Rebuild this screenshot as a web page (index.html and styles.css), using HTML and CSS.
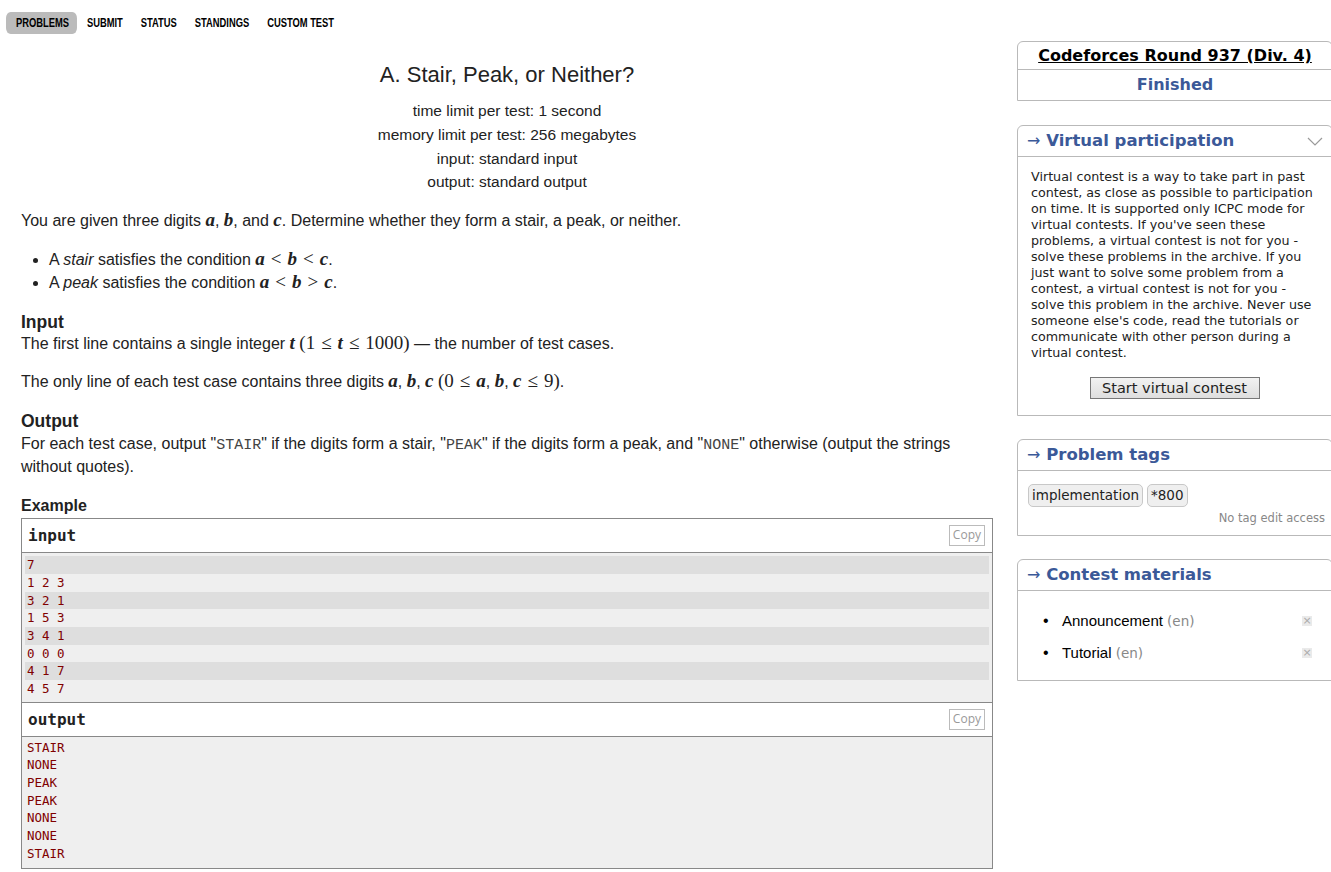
FILE: index.html
```html
<!DOCTYPE html>
<html>
<head>
<meta charset="utf-8">
<link rel="stylesheet" href="styles.css">
</head>
<body>
<div class="layout">
  <main class="main">
    <nav class="menu">
      <a class="menu-item active">PROBLEMS</a>
      <a class="menu-item">SUBMIT</a>
      <a class="menu-item">STATUS</a>
      <a class="menu-item">STANDINGS</a>
      <a class="menu-item">CUSTOM TEST</a>
    </nav>
    <section class="statement">
      <div class="header">
        <div class="title">A. Stair, Peak, or Neither?</div>
        <div class="limit">time limit per test: 1 second</div>
        <div class="limit">memory limit per test: 256 megabytes</div>
        <div class="limit">input: standard input</div>
        <div class="limit">output: standard output</div>
      </div>
      <p class="para first">You are given three digits <span class="m">a</span>, <span class="m">b</span>, and <span class="m">c</span>. Determine whether they form a stair, a peak, or neither.</p>
      <ul class="conds">
        <li>A <i>stair</i> satisfies the condition <span class="m">a</span><span class="mo">&lt;</span><span class="m">b</span><span class="mo">&lt;</span><span class="m">c</span>.</li>
        <li>A <i>peak</i> satisfies the condition <span class="m">a</span><span class="mo">&lt;</span><span class="m">b</span><span class="mo">&gt;</span><span class="m">c</span>.</li>
      </ul>
      <div class="sec-title">Input</div>
      <p class="para tight">The first line contains a single integer <span class="m">t</span> <span class="mn">(1</span><span class="mo">≤</span><span class="m">t</span><span class="mo">≤</span><span class="mn">1000)</span> — the number of test cases.</p>
      <p class="para">The only line of each test case contains three digits <span class="m">a</span>, <span class="m">b</span>, <span class="m">c</span> <span class="mn">(0</span><span class="mo">≤</span><span class="m">a</span>, <span class="m">b</span>, <span class="m">c</span><span class="mo">≤</span><span class="mn">9)</span>.</p>
      <div class="sec-title out">Output</div>
      <p class="para tight out-text">For each test case, output "<code>STAIR</code>" if the digits form a stair, "<code>PEAK</code>" if the digits form a peak, and "<code>NONE</code>" otherwise (output the strings without quotes).</p>
      <div class="sec-title ex">Example</div>
      <div class="sample">
        <div class="sample-head"><span class="sample-name">input</span><span class="copy">Copy</span></div>
        <div class="sample-body">
          <div class="row odd">7</div>
          <div class="row">1 2 3</div>
          <div class="row odd">3 2 1</div>
          <div class="row">1 5 3</div>
          <div class="row odd">3 4 1</div>
          <div class="row">0 0 0</div>
          <div class="row odd">4 1 7</div>
          <div class="row">4 5 7</div>
        </div>
        <div class="sample-head"><span class="sample-name">output</span><span class="copy">Copy</span></div>
        <div class="sample-body last">
          <div class="row">STAIR</div>
          <div class="row">NONE</div>
          <div class="row">PEAK</div>
          <div class="row">PEAK</div>
          <div class="row">NONE</div>
          <div class="row">NONE</div>
          <div class="row">STAIR</div>
        </div>
      </div>
    </section>
  </main>
  <aside class="sidebar">
    <div class="box contest-box">
      <div class="contest-name"><a>Codeforces Round 937 (Div. 4)</a></div>
      <div class="contest-state">Finished</div>
    </div>
    <div class="box">
      <div class="box-title"><span class="arrow">→</span> Virtual participation
        <svg class="chev" width="16" height="10" viewBox="0 0 16 10"><path d="M1 1 L8 8 L15 1" fill="none" stroke="#9a9a9a" stroke-width="1.2"/></svg>
      </div>
      <div class="vp-body">
        <p class="vp-text">Virtual contest is a way to take part in past contest, as close as possible to participation on time. It is supported only ICPC mode for virtual contests. If you've seen these problems, a virtual contest is not for you - solve these problems in the archive. If you just want to solve some problem from a contest, a virtual contest is not for you - solve this problem in the archive. Never use someone else's code, read the tutorials or communicate with other person during a virtual contest.</p>
        <div class="vp-btn-wrap"><button class="vp-btn">Start virtual contest</button></div>
      </div>
    </div>
    <div class="box">
      <div class="box-title"><span class="arrow">→</span> Problem tags</div>
      <div class="tags-body">
        <div class="tags"><span class="tag">implementation</span><span class="tag">*800</span></div>
        <div class="no-edit">No tag edit access</div>
      </div>
    </div>
    <div class="box">
      <div class="box-title"><span class="arrow">→</span> Contest materials</div>
      <ul class="materials">
        <li><span class="mat-name">Announcement <span class="lang">(en)</span></span><span class="xicon">×</span></li>
        <li><span class="mat-name">Tutorial <span class="lang">(en)</span></span><span class="xicon">×</span></li>
      </ul>
    </div>
  </aside>
</div>
</body>
</html>
```
FILE: styles.css
```css
html, body {
  margin: 0;
  padding: 0;
  background: #fff;
  overflow: hidden;
}
body {
  font-family: "Liberation Sans", Arial, sans-serif;
  color: #222;
}
.layout {
  display: flex;
  align-items: flex-start;
  width: 1400px;
}
.main {
  width: 993px;
  flex: none;
}
.menu {
  display: flex;
  margin: 12px 0 0 6.4px;
  height: 22px;
  align-items: center;
  transform: scaleX(0.78);
  transform-origin: 0 0;
}
.menu-item {
  font-family: "Liberation Sans", Arial, sans-serif;
  font-weight: bold;
  font-size: 12px;
  color: #000;
  padding: 0 11.5px;
  height: 22px;
  line-height: 23px;
  border-radius: 6px;
}
.menu-item.active {
  background: #bbbbbb;
  padding: 0 10.3px 0 12.8px;
  margin-right: 1.2px;
}
.statement {
  margin-left: 21px;
  padding-top: 27px;
  font-size: 16px;
  color: #222;
}
.header {
  text-align: center;
}
.title {
  font-size: 22px;
  line-height: 28px;
  margin-bottom: 10px;
}
.limit {
  line-height: 23.8px;
  font-size: 15.5px;
}
.para {
  margin: 15px 0 0 0;
  line-height: 23px;
}
.para.first {
  margin-top: 15px;
}
.para.tight {
  margin-top: 0;
}
.para.out-text {
  margin-top: 1px;
}
.m {
  font-family: "Liberation Serif", "Times New Roman", serif;
  font-style: italic;
  font-weight: bold;
  font-size: 19px;
  line-height: 1;
}
.mn {
  font-family: "Liberation Serif", "Times New Roman", serif;
  font-size: 19px;
  line-height: 1;
}
.mo {
  font-family: "Liberation Serif", "Times New Roman", serif;
  font-size: 19px;
  line-height: 1;
  padding: 0 6px;
}
.conds {
  margin: 16px 0 0 0;
  padding-left: 28px;
  line-height: 23px;
}
.sec-title {
  font-weight: bold;
  font-size: 17.5px;
  line-height: 20px;
  margin-top: 18px;
  color: #222;
}
.sec-title.out {
  margin-top: 18px;
}
.sec-title.ex {
  font-size: 16px;
  margin-top: 17px;
  line-height: 22px;
}
code {
  font-family: "Liberation Mono", "Courier New", monospace;
  font-size: 15px;
  line-height: 1;
  color: #444;
}
.sample {
  margin-top: 1px;
  border: 1px solid #888;
  width: 970px;
}
.sample-head {
  display: flex;
  justify-content: space-between;
  align-items: center;
  height: 33px;
  padding: 0 6px 0 6px;
  border-bottom: 1px solid #888;
  background: #fff;
}
.sample-body + .sample-head {
  border-top: 1px solid #888;
}
.sample-name {
  font-family: "DejaVu Sans Mono", monospace;
  font-weight: bold;
  font-size: 16px;
  color: #222;
}
.copy {
  font-family: "Open Sans", "Liberation Sans", sans-serif;
  font-size: 12px;
  color: #999;
  border: 1px solid #bbb;
  padding: 0 3px;
  height: 19px;
  line-height: 18px;
  margin-right: 1px;
}
.sample-body {
  background: #efefef;
  padding: 3px 3px 4px 3px;
  font-family: "DejaVu Sans Mono", monospace;
  font-size: 12.5px;
  color: #800000;
}
.sample-body.last {
  padding-top: 2px;
  height: 125px;
}
.row {
  height: 17.7px;
  line-height: 17.7px;
  padding-left: 2px;
}
.row.odd {
  background: #dedede;
}
.sidebar {
  width: 316px;
  margin-left: 24px;
  flex: none;
  padding-top: 41px;
  font-family: "DejaVu Sans", Verdana, sans-serif;
}
.box {
  border: 1px solid #b9b9b9;
  border-radius: 6px 6px 0 0;
  margin-bottom: 23px;
}
.contest-box {
  text-align: center;
  margin-bottom: 24px;
}
.contest-name {
  height: 27px;
  line-height: 27px;
  border-bottom: 1px solid #b9b9b9;
  font-weight: bold;
  font-size: 16px;
}
.contest-name a {
  color: #000;
  text-decoration: underline;
}
.contest-state {
  height: 30px;
  line-height: 30px;
  font-weight: bold;
  font-size: 16px;
  color: #3b5998;
}
.box-title {
  position: relative;
  height: 30px;
  line-height: 30px;
  border-bottom: 1px solid #b9b9b9;
  padding-left: 9px;
  font-weight: bold;
  font-size: 16.5px;
  color: #3b5998;
}
.arrow {
  font-family: "DejaVu Sans", sans-serif;
  font-weight: normal;
  font-size: 16px;
}
.chev {
  position: absolute;
  right: 9px;
  top: 11px;
}
.vp-body {
  padding: 12px 14px 16px 13px;
}
.vp-text {
  margin: 0;
  font-size: 12.7px;
  line-height: 16px;
  color: #222;
}
.vp-btn-wrap {
  text-align: center;
  margin-top: 16px;
}
.vp-btn {
  font-family: "DejaVu Sans", Verdana, sans-serif;
  font-size: 14.5px;
  color: #222;
  background: linear-gradient(#f2f2f2, #dedede);
  border: 1px solid #777;
  border-radius: 0;
  width: 170px;
  height: 22px;
  padding: 0;
  line-height: 19px;
}
.tags-body {
  padding: 13px 7px 10px 10px;
}
.tags {
  display: flex;
  gap: 4px;
}
.tag {
  font-size: 13.5px;
  color: #222;
  background: #efefef;
  border: 1px solid #c8c8c8;
  border-radius: 5px;
  padding: 0 3px;
  height: 21px;
  line-height: 21px;
}
.no-edit {
  text-align: right;
  font-size: 11.5px;
  color: #888;
  margin-top: 4px;
}
.materials {
  list-style: none;
  margin: 0;
  padding: 14px 20px 11px 25px;
}
.materials li {
  display: flex;
  justify-content: space-between;
  align-items: center;
  height: 32px;
  font-family: "Liberation Sans", Arial, sans-serif;
  font-size: 15px;
  color: #000;
}
.mat-name::before {
  content: "•";
  display: inline-block;
  width: 19px;
  font-size: 16px;
}
.lang {
  font-family: "DejaVu Sans", Verdana, sans-serif;
  font-size: 13.5px;
  color: #888;
}
.xicon {
  width: 10px;
  height: 10px;
  background: #eaeaea;
  color: #aaa;
  font-size: 11px;
  line-height: 10px;
  text-align: center;
  font-family: "DejaVu Sans", sans-serif;
}
```
